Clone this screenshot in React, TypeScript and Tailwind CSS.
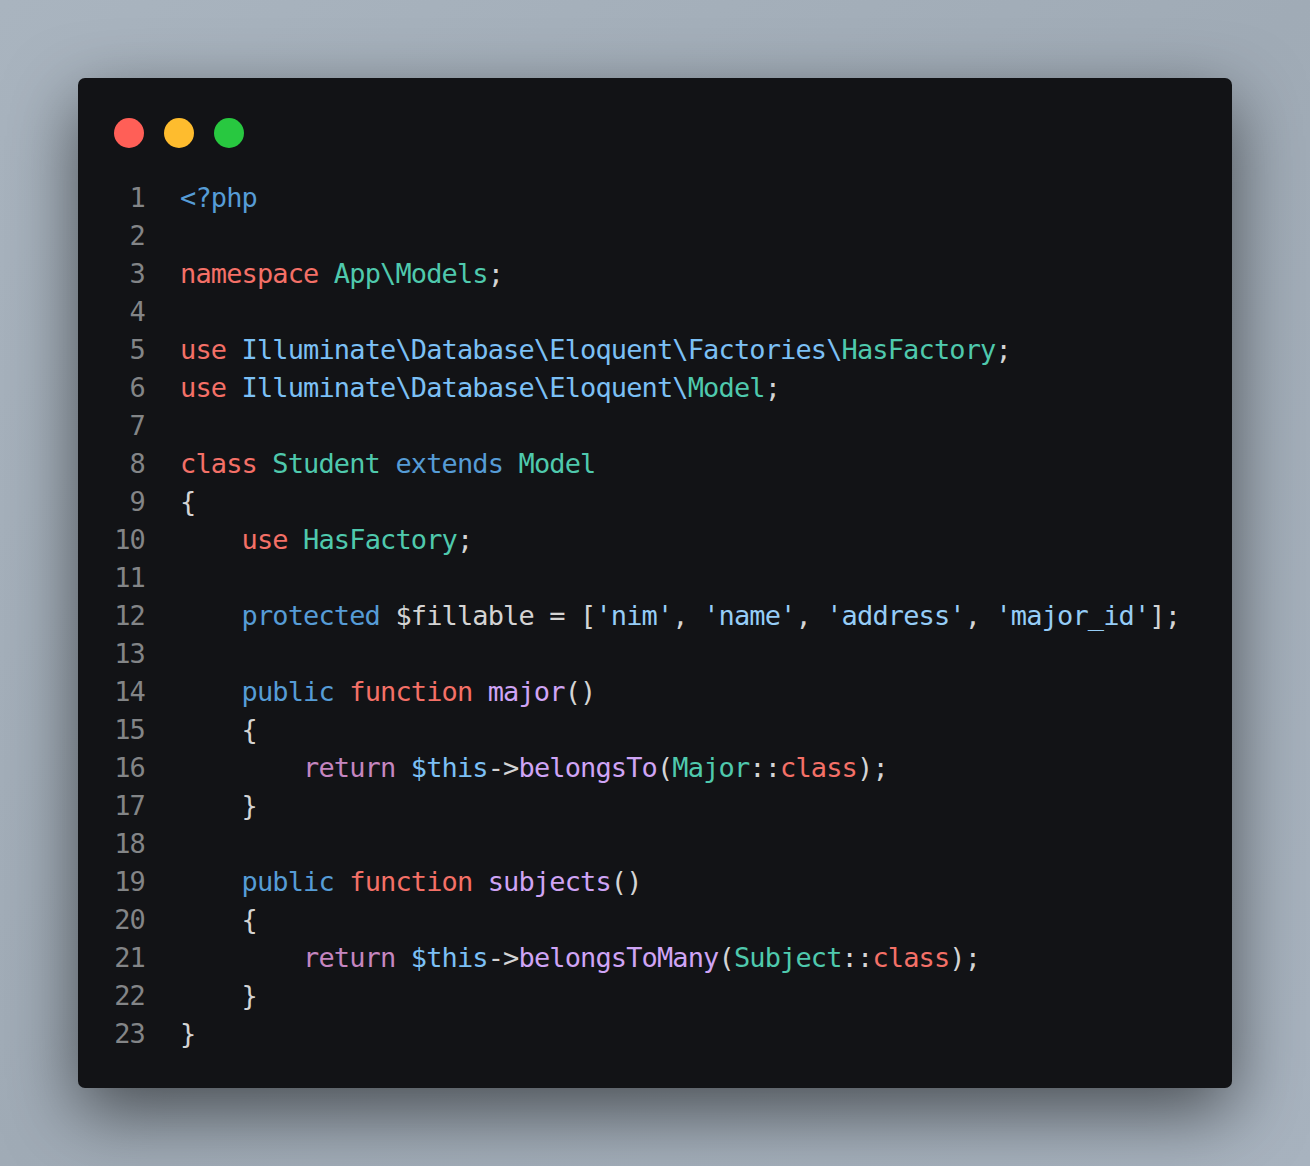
type Tok = [string, string];

const KW = 'text-[#f47067]';
const TY = 'text-[#4fc9ad]';
const NS = 'text-[#7cc0f5]';
const ST = 'text-[#96cdf7]';
const BL = 'text-[#569cd6]';
const RT = 'text-[#c586c0]';
const FN = 'text-[#cfa4f5]';
const PL = 'text-[#d4d4d4]';

const lines: Tok[][] = [
  [['<?php', BL]],
  [],
  [['namespace ', KW], ['App\\Models', TY], [';', PL]],
  [],
  [['use ', KW], ['Illuminate\\Database\\Eloquent\\Factories\\', NS], ['HasFactory', TY], [';', PL]],
  [['use ', KW], ['Illuminate\\Database\\Eloquent\\', NS], ['Model', TY], [';', PL]],
  [],
  [['class ', KW], ['Student ', TY], ['extends ', BL], ['Model', TY]],
  [['{', PL]],
  [['    use ', KW], ['HasFactory', TY], [';', PL]],
  [],
  [
    ['    protected ', BL],
    ['$fillable = [', PL],
    ["'nim'", ST],
    [', ', PL],
    ["'name'", ST],
    [', ', PL],
    ["'address'", ST],
    [', ', PL],
    ["'major_id'", ST],
    ['];', PL],
  ],
  [],
  [['    public ', BL], ['function ', KW], ['major', FN], ['()', PL]],
  [['    {', PL]],
  [
    ['        return ', RT],
    ['$this', NS],
    ['->', PL],
    ['belongsTo', FN],
    ['(', PL],
    ['Major', TY],
    ['::', PL],
    ['class', KW],
    [');', PL],
  ],
  [['    }', PL]],
  [],
  [['    public ', BL], ['function ', KW], ['subjects', FN], ['()', PL]],
  [['    {', PL]],
  [
    ['        return ', RT],
    ['$this', NS],
    ['->', PL],
    ['belongsToMany', FN],
    ['(', PL],
    ['Subject', TY],
    ['::', PL],
    ['class', KW],
    [');', PL],
  ],
  [['    }', PL]],
  [['}', PL]],
];

export default function App() {
  return (
    <div className="w-[1310px] h-[1166px] p-[78px] bg-gradient-to-br from-[#a9b4bf] via-[#a0abb6] to-[#a8b3bf]">
      <div className="h-full rounded-[7px] bg-[#121316] shadow-[0_24px_70px_rgba(0,0,0,0.55)] pt-[40px] pl-[36px]">
        <div className="flex gap-[20px]">
          <span className="w-[30px] h-[30px] rounded-full bg-[#ff5f57]" />
          <span className="w-[30px] h-[30px] rounded-full bg-[#febc2e]" />
          <span className="w-[30px] h-[30px] rounded-full bg-[#28c840]" />
        </div>
        <div
          className="mt-[31px] text-[27px] tracking-[-0.87px] whitespace-pre"
          style={{ fontFamily: '"DejaVu Sans Mono", "Liberation Mono", monospace' }}
        >
          {lines.map((toks, i) => (
            <div key={i} className="flex h-[38px] items-center">
              <span className="w-[31px] text-right text-[#838587] shrink-0">{i + 1}</span>
              <span className="ml-[35px]">
                {toks.map(([t, c], j) => (
                  <span key={j} className={c}>
                    {t}
                  </span>
                ))}
              </span>
            </div>
          ))}
        </div>
      </div>
    </div>
  );
}
